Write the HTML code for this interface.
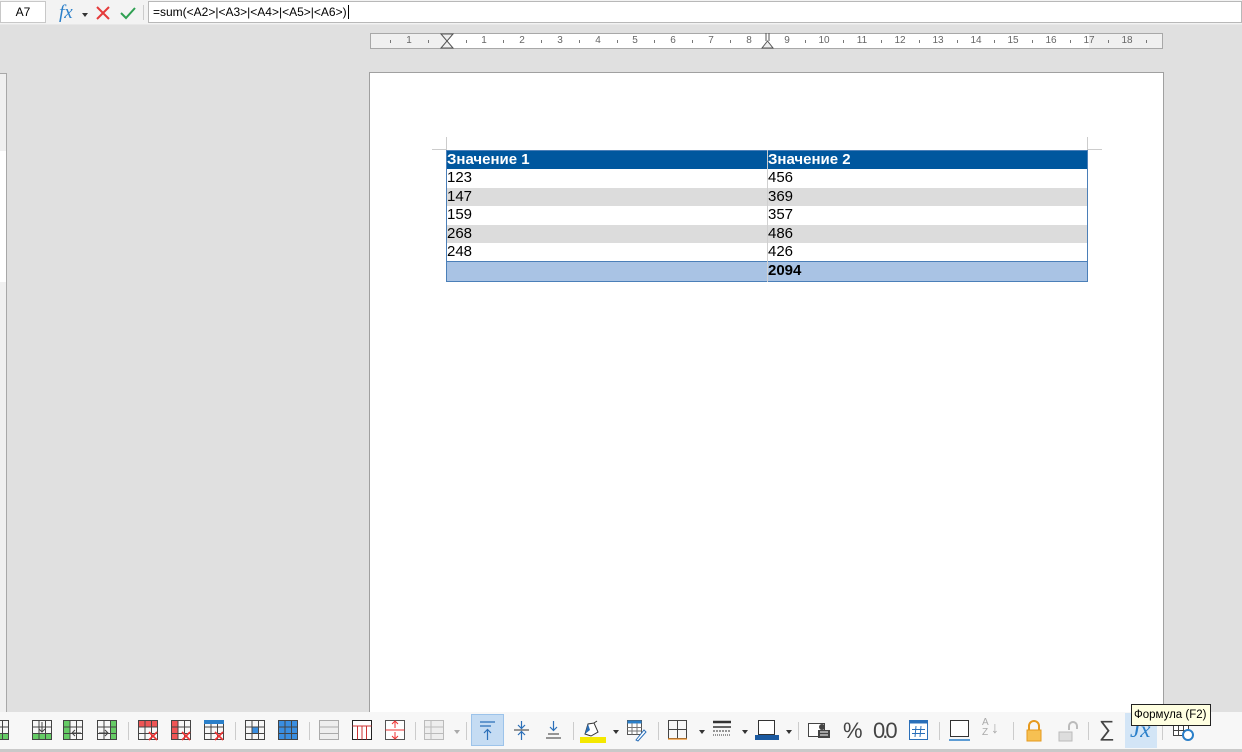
<!DOCTYPE html>
<html><head><meta charset="utf-8"><style>
*{margin:0;padding:0;box-sizing:border-box}
body{width:1242px;height:752px;overflow:hidden;background:#e0e0e0;font-family:"Liberation Sans",sans-serif;position:relative}
.abs{position:absolute}
#top{left:0;top:0;width:1242px;height:25px;background:#f3f3f3;border-bottom:1px solid #e8e8e8}
#nb{left:0;top:1px;width:46px;height:22px;background:#fff;border:1px solid #c8c8c8;font-size:12px;text-align:center;line-height:20px}
#fi{left:148px;top:1px;width:1094px;height:22px;background:#fff;border:1px solid #b8b8b8;font-size:12px;line-height:20px;padding-left:4px}
#ruler{left:370px;top:33px;width:793px;height:16px;background:#f0f0f0;border:1px solid #a8a8a8}
#ruler .w{position:absolute;left:76px;top:0;width:642px;height:14px;background:#fff}
.rn{position:absolute;top:1px;font-size:10px;color:#666;width:16px;margin-left:-8px;text-align:center}
.rt{position:absolute;top:6px;width:1px;height:3px;background:#777}
#page{left:369px;top:72px;width:795px;height:645px;background:#fff;border:1px solid #a0a0a0}
#vr{left:0;top:73px;width:7px;height:640px;background:#f0f0f0;border:1px solid #a8a8a8;border-left:none}
table{position:absolute;left:446px;top:150px;width:642px;border-collapse:collapse;font-size:15px;border:1px solid #4b7fb8}
td{height:18.5px;padding:0;line-height:17px;vertical-align:top;border-left:1px solid #d0d0d0}
td:first-child{border-left:none;width:321px}
tr.h td{background:#00579e;color:#fff;font-weight:bold;border-left-color:#ccc}
tr.g td{background:#dcdcdc}
tr.t td{background:#a9c3e4;font-weight:bold;border-top:1px solid #4b7fb8;height:20px}
#tb{left:0;top:712px;width:1242px;height:40px;background:#f7f7f7;border-bottom:3px solid #c9c9c9}
.ic{position:absolute;top:720px}
.sep{position:absolute;top:722px;width:1px;height:18px;background:#ccc}
.dd{position:absolute;top:730px;width:0;height:0;border-left:3px solid transparent;border-right:3px solid transparent;border-top:4px solid #333}
#tip{left:1131px;top:704px;width:80px;height:22px;background:#ffffe1;border:1px solid #222;font-size:11.5px;line-height:20px;padding-left:2px;white-space:nowrap;overflow:hidden}
</style></head><body>
<div class="abs" id="top"></div>
<div class="abs" id="nb">A7</div>
<div class="abs" style="left:59px;top:2px;font-family:'Liberation Serif',serif;font-style:italic;color:#2a7fc9;font-size:19px">fx</div>
<div class="abs dd" style="left:82px;top:13px"></div>
<svg class="abs" style="left:95px;top:6px" width="16" height="14"><path d="M2 1L14 13M14 1L2 13" stroke="#e53a3a" stroke-width="2"/></svg>
<svg class="abs" style="left:120px;top:6px" width="16" height="14"><path d="M1 7L6 12L15 2" stroke="#2fa052" stroke-width="2" fill="none"/></svg>
<div class="abs" style="left:143px;top:5px;width:1px;height:15px;background:#ccc"></div>
<div class="abs" id="fi">=sum(&lt;A2&gt;|&lt;A3&gt;|&lt;A4&gt;|&lt;A5&gt;|&lt;A6&gt;)<span style="border-left:1px solid #000;margin-left:1px"></span></div>

<div class="abs" id="ruler"><div class="w"></div>
<div class="rn" style="left:38px">1</div>
<div class="rn" style="left:113px">1</div><div class="rn" style="left:151px">2</div><div class="rn" style="left:189px">3</div><div class="rn" style="left:227px">4</div><div class="rn" style="left:264px">5</div><div class="rn" style="left:302px">6</div><div class="rn" style="left:340px">7</div><div class="rn" style="left:378px">8</div><div class="rn" style="left:416px">9</div><div class="rn" style="left:453px">10</div><div class="rn" style="left:491px">11</div><div class="rn" style="left:529px">12</div><div class="rn" style="left:567px">13</div><div class="rn" style="left:605px">14</div><div class="rn" style="left:642px">15</div><div class="rn" style="left:680px">16</div><div class="rn" style="left:718px">17</div><div class="rn" style="left:756px">18</div>
<div class="rt" style="left:19px"></div><div class="rt" style="left:57px"></div><div class="rt" style="left:95px"></div><div class="rt" style="left:132px"></div><div class="rt" style="left:170px"></div><div class="rt" style="left:208px"></div><div class="rt" style="left:246px"></div><div class="rt" style="left:283px"></div><div class="rt" style="left:321px"></div><div class="rt" style="left:359px"></div><div class="rt" style="left:434px"></div><div class="rt" style="left:472px"></div><div class="rt" style="left:510px"></div><div class="rt" style="left:548px"></div><div class="rt" style="left:586px"></div><div class="rt" style="left:623px"></div><div class="rt" style="left:661px"></div><div class="rt" style="left:699px"></div><div class="rt" style="left:737px"></div><div class="rt" style="left:775px"></div>
<svg style="position:absolute;left:69px;top:-1px" width="14" height="16"><path d="M1 1H13L7 8L13 15H1L7 8Z" fill="#eee" stroke="#555"/></svg>
<svg style="position:absolute;left:390px;top:-1px" width="14" height="16"><path d="M5 0V8M8 0V8M1 15L6.5 8L12 15Z" fill="#eee" stroke="#555"/></svg>
</div>
<div class="abs" id="vr"><div style="position:absolute;left:0;top:77px;width:6px;height:131px;background:#fff"></div></div>
<div class="abs" id="page"></div>
<div class="abs" style="left:446px;top:137px;width:1px;height:13px;background:#ccc"></div>
<div class="abs" style="left:432px;top:149px;width:14px;height:1px;background:#ccc"></div>
<div class="abs" style="left:1087px;top:137px;width:1px;height:13px;background:#ccc"></div>
<div class="abs" style="left:1088px;top:149px;width:14px;height:1px;background:#ccc"></div>
<table>
<tr class="h"><td>Значение 1</td><td>Значение 2</td></tr>
<tr><td>123</td><td>456</td></tr>
<tr class="g"><td>147</td><td>369</td></tr>
<tr><td>159</td><td>357</td></tr>
<tr class="g"><td>268</td><td>486</td></tr>
<tr><td>248</td><td>426</td></tr>
<tr class="t"><td></td><td>2094</td></tr>
</table>

<div class="abs" id="tb"></div>
<svg width="0" height="0" style="position:absolute"><defs>
<g id="gr"><rect x="0.5" y="0.5" width="19" height="19" fill="none" stroke="#444"/><path d="M7 0.5V19.5M13.5 0.5V19.5M0.5 7H19.5M0.5 13.5H19.5" stroke="#444"/></g>
<g id="rx"><path d="M11 12L19 20M19 12L11 20" stroke="#e33" stroke-width="1.6"/></g>
</defs></svg>
<svg class="ic" style="left:-11px" width="21" height="21"><rect x="0" y="13.5" width="20" height="6" fill="#6c6"/><use href="#gr"/></svg>
<svg class="ic" style="left:32px" width="21" height="21"><rect x="0" y="13.5" width="20" height="6" fill="#6c6"/><use href="#gr"/><path d="M10 2V12M7 9L10 12L13 9" stroke="#444" fill="none"/></svg>
<svg class="ic" style="left:63px" width="21" height="21"><rect x="0" y="0" width="7" height="20" fill="#6c6"/><use href="#gr"/><path d="M18 13H9M12 10L9 13L12 16" stroke="#444" fill="none"/></svg>
<svg class="ic" style="left:97px" width="21" height="21"><rect x="13.5" y="0" width="6.5" height="20" fill="#6c6"/><use href="#gr"/><path d="M2 13H11M8 10L11 13L8 16" stroke="#444" fill="none"/></svg>
<div class="sep" style="left:128px"></div>
<svg class="ic" style="left:138px" width="21" height="21"><rect x="0" y="0" width="20" height="7" fill="#e55"/><use href="#gr"/><use href="#rx"/></svg>
<svg class="ic" style="left:171px" width="21" height="21"><rect x="0" y="0" width="7" height="20" fill="#e55"/><use href="#gr"/><use href="#rx"/></svg>
<svg class="ic" style="left:204px" width="21" height="21"><use href="#gr"/><rect x="0" y="0" width="20" height="4" fill="#2a7fc9"/><use href="#rx"/></svg>
<div class="sep" style="left:235px"></div>
<svg class="ic" style="left:245px" width="21" height="21"><use href="#gr"/><rect x="7.5" y="7.5" width="5.5" height="5.5" fill="#3a8ee0"/></svg>
<svg class="ic" style="left:278px" width="21" height="21"><rect x="0" y="0" width="20" height="20" fill="#3a8ee0"/><use href="#gr"/></svg>
<div class="sep" style="left:309px"></div>
<svg class="ic" style="left:319px" width="21" height="21"><rect x="0.5" y="0.5" width="19" height="19" fill="#eee" stroke="#aaa"/><path d="M0.5 7H19.5M0.5 13.5H19.5" stroke="#aaa"/></svg>
<svg class="ic" style="left:352px" width="21" height="21"><rect x="0.5" y="0.5" width="19" height="19" fill="#fff" stroke="#222"/><path d="M0.5 6H19.5M5.5 6V19.5M10 6V19.5M14.5 6V19.5" stroke="#c33"/></svg>
<svg class="ic" style="left:385px" width="21" height="21"><rect x="0.5" y="0.5" width="19" height="19" fill="#fff" stroke="#555"/><path d="M0.5 10H19.5" stroke="#e33"/><path d="M10 1V8M7 4L10 1L13 4M10 12V19M7 16L10 19L13 16" stroke="#e33" fill="none"/></svg>
<div class="sep" style="left:415px"></div>
<svg class="ic" style="left:424px" width="21" height="21"><rect x="0.5" y="0.5" width="19" height="19" fill="#eee" stroke="#bbb"/><path d="M0.5 7H19.5M0.5 13.5H19.5M7 0.5V19.5" stroke="#bbb"/></svg>
<div class="dd" style="left:454px;border-top-color:#aaa"></div>
<div class="sep" style="left:466px"></div>
<div class="abs" style="left:471px;top:714px;width:33px;height:32px;background:#c5dcf3;border:1px solid #9cc3ea"></div>
<svg class="ic" style="left:479px" width="18" height="22"><path d="M1 2H16M1 6H12M8.5 20V10M5 13L8.5 9.5L12 13" stroke="#2a6fb9" fill="none" stroke-width="1.2"/></svg>
<svg class="ic" style="left:513px" width="18" height="22"><path d="M8.5 1V8M5 5L8.5 8.5L12 5M8.5 20V12M5 15L8.5 11.5L12 15" stroke="#2a6fb9" fill="none" stroke-width="1.2"/><path d="M1 10H16" stroke="#333"/></svg>
<svg class="ic" style="left:545px" width="18" height="22"><path d="M8.5 1V10M5 7L8.5 10.5L12 7" stroke="#2a6fb9" fill="none" stroke-width="1.2"/><path d="M3 14H14M1 18H16" stroke="#333"/></svg>
<div class="sep" style="left:573px"></div>
<svg class="ic" style="left:580px" width="26" height="24"><rect x="0" y="17" width="26" height="6" fill="#f4e800"/><path d="M5 14L8 4L14 3L18 12L11 16Z" fill="#fff" stroke="#333"/><path d="M5 14L8 4L10 10Z" fill="#2a6fb9"/><path d="M14 3L17 1" stroke="#333"/></svg>
<div class="dd" style="left:613px"></div>
<svg class="ic" style="left:627px" width="20" height="22"><rect x="0.5" y="0.5" width="14" height="14" fill="#fff" stroke="#555"/><rect x="0.5" y="0.5" width="14" height="3" fill="#2a7fc9"/><path d="M0.5 7.5H14.5M0.5 11H14.5M5 3V14.5M10 3V14.5" stroke="#777"/><path d="M9 20L17 10L19 12L11 21Z" fill="#fff" stroke="#2a6fb9"/></svg>
<div class="sep" style="left:658px"></div>
<svg class="ic" style="left:668px" width="20" height="21"><rect x="0.5" y="0.5" width="18" height="18" fill="none" stroke="#444"/><path d="M9.5 0.5V18.5M0.5 9.5H18.5" stroke="#444"/><path d="M0 19H19" stroke="#f08c1e" stroke-width="1.3"/></svg>
<div class="dd" style="left:699px"></div>
<svg class="ic" style="left:712px" width="20" height="20"><path d="M1 2H19" stroke="#333" stroke-width="2.5"/><path d="M1 7H19" stroke="#333" stroke-width="1.5"/><path d="M1 11H19" stroke="#333" stroke-dasharray="2 1"/><path d="M1 15H19" stroke="#333" stroke-dasharray="1 1"/></svg>
<div class="dd" style="left:742px"></div>
<svg class="ic" style="left:755px" width="24" height="22"><rect x="3.5" y="0.5" width="16" height="14" fill="#fff" stroke="#333"/><rect x="0" y="15" width="24" height="5" fill="#1c5aa0"/></svg>
<div class="dd" style="left:786px"></div>
<div class="sep" style="left:798px"></div>
<svg class="ic" style="left:808px" width="24" height="20"><rect x="0.5" y="3.5" width="16" height="13" fill="#fff" stroke="#444"/><circle cx="14" cy="7" r="3" fill="#444"/><rect x="10" y="10" width="12" height="8" fill="#444"/><path d="M12 12H20M12 15H20" stroke="#fff"/></svg>
<div class="abs" style="left:843px;top:718px;font-size:22px;color:#444">%</div>
<div class="abs" style="left:873px;top:718px;font-size:22px;color:#444;letter-spacing:-3px">0.0</div>
<svg class="ic" style="left:909px" width="20" height="21"><rect x="0.5" y="0.5" width="18" height="19" fill="#fff" stroke="#2a6fb9"/><rect x="0.5" y="0.5" width="18" height="3" fill="#2a6fb9"/><path d="M7 6L6 17M12 6L11 17M3 9.5H16M3 13.5H16" stroke="#2a6fb9"/></svg>
<div class="sep" style="left:939px"></div>
<svg class="ic" style="left:949px" width="24" height="22"><rect x="1.5" y="0.5" width="18" height="16" fill="#fff" stroke="#333"/><path d="M0 20H21" stroke="#2a7fc9" stroke-width="1.5"/></svg>
<div class="abs" style="left:982px;top:718px;font-size:10px;color:#aaa;line-height:10px">A<br>Z</div><div class="abs" style="left:991px;top:720px;font-size:16px;color:#aaa">↓</div>
<div class="sep" style="left:1013px"></div>
<svg class="ic" style="left:1025px" width="18" height="22"><path d="M4 10V6A5 5 0 0 1 14 6V10" stroke="#e69a1e" stroke-width="2" fill="none"/><rect x="2" y="10" width="14" height="11" fill="#f6c052" stroke="#e69a1e"/></svg>
<svg class="ic" style="left:1057px" width="22" height="22"><path d="M12 10V6A4 4 0 0 1 20 6V9" stroke="#bbb" stroke-width="2" fill="none"/><rect x="2" y="12" width="13" height="9" fill="#ddd" stroke="#bbb"/></svg>
<div class="sep" style="left:1088px"></div>
<div class="abs" style="left:1099px;top:716px;font-size:22px;color:#444">∑</div>
<div class="abs" style="left:1125px;top:713px;width:32px;height:35px;background:#d3e5f6"></div>
<div class="abs" style="left:1130px;top:717px;font-family:'Liberation Serif',serif;font-style:italic;color:#2a7fc9;font-size:23px">Jx</div>
<div class="sep" style="left:1162px"></div>
<svg class="ic" style="left:1173px" width="22" height="22"><rect x="0.5" y="0.5" width="15" height="15" fill="#fff" stroke="#444"/><path d="M0.5 5.5H15.5M0.5 10.5H15.5M5.5 0.5V15.5M10.5 0.5V15.5" stroke="#444"/><circle cx="15" cy="15" r="5" fill="#fff" stroke="#2a7fc9" stroke-width="2"/></svg>
<div class="abs" id="tip">Формула (F2)</div>
</body></html>
